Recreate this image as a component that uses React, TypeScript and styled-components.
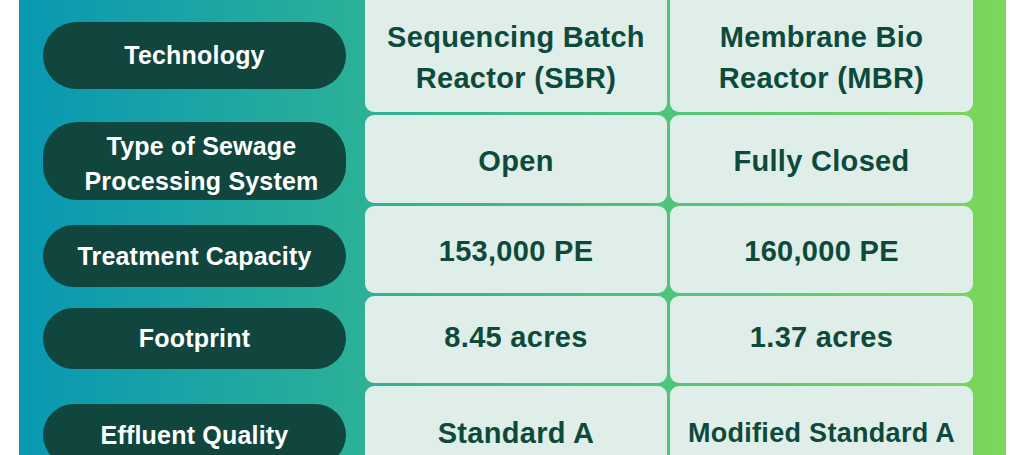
import React from "react";
import styled, { createGlobalStyle } from "styled-components";

const GlobalStyle = createGlobalStyle`
  html, body {
    margin: 0;
    padding: 0;
    background: #ffffff;
    overflow: hidden;
  }
  body {
    font-family: "Liberation Sans", Arial, sans-serif;
  }
`;

type Row = {
  label: string[];
  top: number;
  height: number;
  shift?: number;
  sbr: string[];
  mbr: string[];
  mbrSize?: number;
  lift?: number;
};

const rows: Row[] = [
  {
    label: ["Technology"],
    top: 30,
    height: 67,
    sbr: ["Sequencing Batch", "Reactor (SBR)"],
    mbr: ["Membrane Bio", "Reactor (MBR)"],
    lift: 11,
  },
  {
    label: ["Type of Sewage", "Processing System"],
    top: 7,
    height: 78,
    shift: 6,
    sbr: ["Open"],
    mbr: ["Fully Closed"],
    lift: 4,
  },
  {
    label: ["Treatment Capacity"],
    top: 19,
    height: 62,
    sbr: ["153,000 PE"],
    mbr: ["160,000 PE"],
    lift: 4,
  },
  {
    label: ["Footprint"],
    top: 12,
    height: 61,
    sbr: ["8.45 acres"],
    mbr: ["1.37 acres"],
    lift: -4,
  },
  {
    label: ["Effluent Quality"],
    top: 18,
    height: 62,
    sbr: ["Standard A"],
    mbr: ["Modified Standard A"],
    mbrSize: 27,
  },
];

const App = () => {
  return (
    <>
      <GlobalStyle />
      <Panel>
        {rows.map((r) => (
          <React.Fragment key={r.label.join(" ")}>
            <Pill top={r.top} h={r.height} shift={r.shift || 0}>
              {r.label.map((l) => (
                <span key={l}>{l}</span>
              ))}
            </Pill>
            <Cell lift={r.lift || 0}>
              {r.sbr.map((l) => (
                <span key={l}>{l}</span>
              ))}
            </Cell>
            <Cell lift={r.lift || 0} size={r.mbrSize}>
              {r.mbr.map((l) => (
                <span key={l}>{l}</span>
              ))}
            </Cell>
          </React.Fragment>
        ))}
      </Panel>
    </>
  );
};

export default App;

const Panel = styled.div`
  margin: -8px 0 0 19px;
  width: 987px;
  box-sizing: border-box;
  padding: 0 33px 0 24px;
  display: grid;
  grid-template-columns: 319px 302px 303px;
  grid-template-rows: 120px 88px 87px 87px 94px;
  column-gap: 3px;
  row-gap: 3px;
  background: linear-gradient(90deg, #0898b3 0%, #2bb098 34%, #4fc47a 66%, #7dd85a 100%);
`;

const Pill = styled.div<{ top: number; h: number; shift: number }>`
  align-self: start;
  justify-self: start;
  margin-top: ${({ top }) => top}px;
  width: 303px;
  height: ${({ h }) => h}px;
  border-radius: 34px;
  background: #10463d;
  color: #ffffff;
  font-weight: 700;
  font-size: 25px;
  line-height: 35px;
  letter-spacing: 0.2px;
  display: flex;
  flex-direction: column;
  align-items: center;
  justify-content: center;
  text-align: center;
  padding-top: ${({ shift }) => shift}px;
  padding-left: ${({ shift }) => (shift ? 14 : 0)}px;
  box-sizing: border-box;
`;

const Cell = styled.div<{ lift: number; size?: number }>`
  background: #dfeee9;
  border-radius: 9px;
  color: #0e4a3b;
  font-weight: 700;
  font-size: ${({ size }) => size || 29}px;
  line-height: 41px;
  letter-spacing: 0.3px;
  display: flex;
  flex-direction: column;
  align-items: center;
  justify-content: center;
  text-align: center;
  padding-top: ${({ lift }) => Math.max(lift, 0)}px;
  padding-bottom: ${({ lift }) => Math.max(-lift, 0)}px;
  box-sizing: border-box;
`;
